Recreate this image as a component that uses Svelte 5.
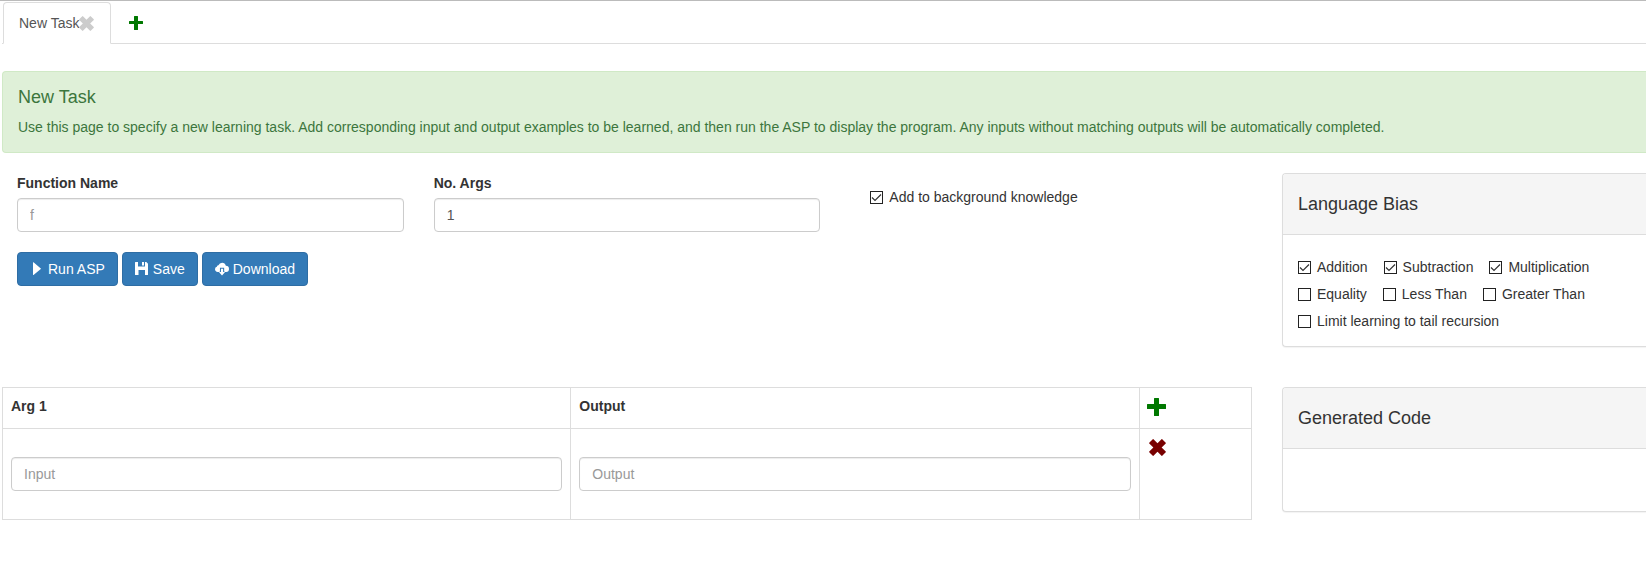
<script>
  let functionName = $state('');
  let argCount = $state('1');
  let background = $state(true);
  let bias = $state([
    [
      { id: 'addition', label: 'Addition', on: true },
      { id: 'subtraction', label: 'Subtraction', on: true },
      { id: 'multiplication', label: 'Multiplication', on: true }
    ],
    [
      { id: 'equality', label: 'Equality', on: false },
      { id: 'less', label: 'Less Than', on: false },
      { id: 'greater', label: 'Greater Than', on: false }
    ],
    [{ id: 'tail', label: 'Limit learning to tail recursion', on: false }]
  ]);
</script>

{#snippet cross(size)}
  <svg width={size} height={size} viewBox="0 0 14 14" fill="currentColor" aria-hidden="true">
    <path d="M3.1.2.2 3.1Q0 3.4.2 3.7L3.6 7 .2 10.3Q0 10.6.2 10.9l2.9 2.9q.3.2.6 0L7 10.4l3.3 3.4q.3.2.6 0l2.9-2.9q.2-.3 0-.6L10.4 7l3.4-3.3q.2-.3 0-.6L10.9.2q-.3-.2-.6 0L7 3.6 3.7.2Q3.4 0 3.1.2z" />
  </svg>
{/snippet}

<main>
  <nav class="tabs">
    <div class="tab">
      <a href="#new-task">New Task</a>
      <button class="icon close" type="button" aria-label="Close tab">{@render cross(15)}</button>
    </div>
    <button class="icon add-tab" type="button" aria-label="Add tab">
      <svg width="14" height="14" viewBox="0 0 14 14" fill="currentColor" aria-hidden="true"><path d="M5.500 0h3q.5 0 .5.5V5h4.500q.5 0 .5.5v2q0 .5-.5.5H9v5.500q0 .5-.5.5h-3q-.5 0-.5-.5V8H.5Q0 8 0 7.500v-2Q0 5 .5 5H5V.5q0-.5.5-.5z" /></svg>
    </button>
  </nav>

  <section class="alert">
    <h4>New Task</h4>
    <p>Use this page to specify a new learning task. Add corresponding input and output examples to be learned, and then run the ASP to display the program. Any inputs without matching outputs will be automatically completed.</p>
  </section>

  <div class="layout">
    <form class="setup">
      <div class="fields">
        <div class="field">
          <label for="fn">Function Name</label>
          <input class="control" id="fn" type="text" placeholder="f" bind:value={functionName} />
        </div>
        <div class="field">
          <label for="args">No. Args</label>
          <input class="control" id="args" type="text" bind:value={argCount} />
        </div>
        <div class="background">
          <label class="check"><input type="checkbox" bind:checked={background} />Add to background knowledge</label>
        </div>
      </div>
      <div class="actions">
        <button class="btn" type="button">
          <svg width="14" height="14" viewBox="0 0 14 14" fill="currentColor" aria-hidden="true"><path d="M3 .6v12.2q0 .5.5.2l7.3-6q.4-.3 0-.6L3.500.3Q3 0 3 .6z" /></svg>
          Run ASP
        </button>
        <button class="btn" type="button">
          <svg width="14" height="14" viewBox="0 0 14 14" fill="currentColor" aria-hidden="true"><path fill-rule="evenodd" d="M.5 0H3v4.500h7V0h1.300L13 1.700V12.500q0 .5-.5.5H10V8H3.500v5H.5q-.5 0-.5-.5V.5Q0 0 .5 0zM7 0h2v3.500H7z" /></svg>
          Save
        </button>
        <button class="btn" type="button">
          <svg width="14" height="14" viewBox="0 0 15 14" fill="currentColor" aria-hidden="true"><path d="M3 10.200Q0 10 0 7.400 0 5.200 2 4.700 1.900 2.900 3.700 3 4.800.2 7.600.2q3.200 0 4 3.400Q15 3.700 15 7q0 3-3 3.200h-1.300L9.800 9.600V5.700H5.300v3.900l-.8.6zM6.400 6.800h2.300v3.400h2.100L7.500 14l-3.300-3.800h2.200z" /></svg>
          Download
        </button>
      </div>
    </form>

    <section class="panel">
      <header><h4>Language Bias</h4></header>
      <div class="body">
        {#each bias as row}
          <div class="options">
            {#each row as option (option.id)}
              <label class="check"><input type="checkbox" bind:checked={option.on} />{option.label}</label>
            {/each}
          </div>
        {/each}
      </div>
    </section>

    <table>
      <colgroup><col class="wide" /><col class="wide" /><col /></colgroup>
      <thead>
        <tr>
          <th scope="col">Arg 1</th>
          <th scope="col">Output</th>
          <th class="tools">
            <button class="icon add-row" type="button" aria-label="Add example">
              <svg width="19" height="18" viewBox="0 0 19 18" fill="currentColor" aria-hidden="true"><path d="M7.500 0h4q.5 0 .5.5V6h6.500q.5 0 .5.5v4q0 .5-.5.5H12v6.500q0 .5-.5.5h-4q-.5 0-.5-.5V11H.5q-.5 0-.5-.5v-4Q0 6 .5 6H7V.5q0-.5.5-.5z" /></svg>
            </button>
          </th>
        </tr>
      </thead>
      <tbody>
        <tr>
          <td class="entry"><input class="control" type="text" placeholder="Input" aria-label="Input" /></td>
          <td class="entry"><input class="control" type="text" placeholder="Output" aria-label="Output" /></td>
          <td class="tools"><button class="icon remove-row" type="button" aria-label="Remove example">{@render cross(17)}</button></td>
        </tr>
      </tbody>
    </table>

    <section class="panel">
      <header><h4>Generated Code</h4></header>
      <div class="body code"></div>
    </section>
  </div>
</main>

<style>
  :global(body) {
    margin: 0;
    background: #fff;
  }
  main,
  main * {
    box-sizing: border-box;
  }
  main {
    padding-left: 2px;
    border-top: 1px solid #bbb;
    font: 14px/20px "Liberation Sans", Arial, sans-serif;
    color: #333;
  }
  h4,
  p {
    margin: 0;
  }
  h4 {
    font-size: 18px;
    font-weight: 400;
    line-height: 20px;
  }
  svg {
    display: block;
  }
  .icon {
    display: block;
    padding: 0;
    border: 0;
    background: none;
    cursor: pointer;
  }
  .tabs {
    display: flex;
    align-items: flex-end;
    padding-top: 1px;
    padding-left: 1px;
    border-bottom: 1px solid #ddd;
  }
  .tab {
    display: flex;
    align-items: center;
    height: 42px;
    margin-bottom: -1px;
    padding: 0 16px 0 15px;
    border: 1px solid #ddd;
    border-bottom-color: #fff;
    border-radius: 4px 4px 0 0;
    background: #fff;
  }
  .tab a {
    color: #555;
    text-decoration: none;
  }
  .close {
    color: #ccc;
  }
  .add-tab {
    align-self: center;
    margin-left: 18px;
    color: #007800;
  }
  .alert {
    display: grid;
    gap: 10px;
    margin: 27px 0 20px;
    padding: 15px;
    border: 1px solid #d0e9c6;
    border-right: 0;
    border-radius: 4px 0 0 4px;
    background: #dff0d8;
    color: #3c763d;
  }
  .layout {
    display: grid;
    grid-template-columns: minmax(0, 1250fr) minmax(0, 364fr);
    gap: 40px 30px;
    align-items: start;
  }
  .fields {
    display: grid;
    grid-template-columns: repeat(3, 1fr);
  }
  .field {
    padding: 0 15px;
  }
  .field label {
    display: block;
    margin-bottom: 5px;
    font-weight: 700;
  }
  .control {
    display: block;
    width: 100%;
    height: 34px;
    padding: 6px 12px;
    border: 1px solid #ccc;
    border-radius: 4px;
    background: #fff;
    box-shadow: inset 0 1px 1px rgba(0, 0, 0, 0.075);
    font: inherit;
    color: #555;
  }
  .control::placeholder {
    color: #999;
    opacity: 1;
  }
  .background {
    padding: 14px 35px;
  }
  .check {
    display: inline-flex;
    align-items: center;
    gap: 6px;
  }
  .check input {
    appearance: none;
    width: 13px;
    height: 13px;
    margin: 0;
    border: 1px solid #222;
    background: #fff;
  }
  .check input:checked {
    background: url("data:image/svg+xml,%3Csvg xmlns='http://www.w3.org/2000/svg' viewBox='0 0 11 11'%3E%3Cpath d='M1 5.500 4 8.500 10 2.500' fill='none' stroke='%23333' stroke-width='1.200'/%3E%3C/svg%3E") center / 11px 11px no-repeat;
  }
  .actions {
    display: flex;
    gap: 4px;
    padding: 20px 15px 0;
  }
  .btn {
    display: flex;
    align-items: center;
    gap: 4px;
    height: 34px;
    padding: 0 12px;
    border: 1px solid #2e6da4;
    border-radius: 4px;
    background: #337ab7;
    color: #fff;
    font: inherit;
    cursor: pointer;
  }
  .panel {
    border: 1px solid #ddd;
    border-right: 0;
    border-radius: 4px 0 0 4px;
    background: #fff;
    box-shadow: 0 1px 1px rgba(0, 0, 0, 0.05);
  }
  .panel header {
    padding: 20px 15px;
    border-bottom: 1px solid #ddd;
    border-top-left-radius: 3px;
    background: #f5f5f5;
  }
  .body {
    padding: 15px;
  }
  .code {
    height: 62px;
  }
  .options {
    display: flex;
    gap: 16px;
    padding-top: 7px;
  }
  table {
    width: 100%;
    border-collapse: collapse;
    table-layout: fixed;
  }
  .wide {
    width: 45.5%;
  }
  th,
  td {
    padding: 8px;
    border: 1px solid #ddd;
    text-align: left;
    vertical-align: top;
  }
  th {
    height: 41px;
  }
  .entry {
    padding: 28px 8px;
  }
  .tools {
    padding: 10px 7px;
  }
  .add-row {
    color: #007800;
  }
  .remove-row {
    padding-left: 2px;
    color: #780000;
  }
</style>
